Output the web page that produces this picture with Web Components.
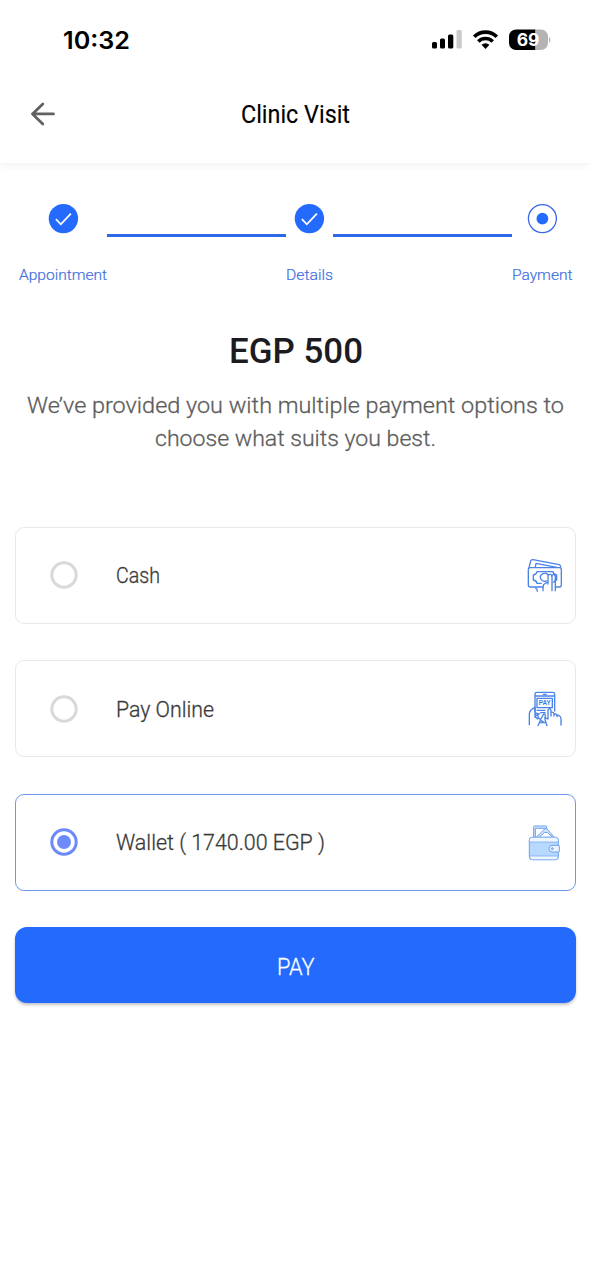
<!DOCTYPE html>
<html lang="en">
<head>
<meta charset="utf-8">
<title>Clinic Visit</title>
<style>
html, body { margin: 0; background: #fff; }
body { font-family: Roboto, "Noto Sans", sans-serif; color: #3c3c3c; }
</style>
</head>
<body>
<clinic-payment></clinic-payment>
<script>
function define(name, html, setup) {
  const tpl = document.createElement('template');
  tpl.innerHTML = html;
  customElements.define(name, class extends HTMLElement {
    connectedCallback() {
      if (this.shadowRoot) return;
      this.attachShadow({ mode: 'open' }).append(tpl.content.cloneNode(true));
      if (setup) setup(this, this.shadowRoot);
    }
  });
}

/* One line of text condensed or widened to a given width. */
define('fit-text', `<style>
:host { display: block; white-space: nowrap; }
span { display: inline-block; transform-origin: 0 50%; }
</style><span><slot></slot></span>`, (host, root) => {
  const w = +host.getAttribute('w');
  host.style.width = w + 'px';
  const span = root.querySelector('span');
  const fit = () => {
    span.style.transform = 'none';
    const real = span.getBoundingClientRect().width;
    if (real) span.style.transform = 'scaleX(' + w / real + ')';
  };
  requestAnimationFrame(fit);
  fit();
});

define('status-bar', `<style>
:host { display: flex; height: 79px; align-items: center; padding: 0 40px 0 63px; box-sizing: border-box; justify-content: space-between; color: #000; }
.time { font: 600 24px/30px Inter, sans-serif; padding-top: 2px; }
svg { display: block; }
.n { font: 700 17.5px Inter, sans-serif; }
</style>
<fit-text class="time" w="67">10:32</fit-text>
<svg width="120" height="24" viewBox="431 28 120 24">
<rect x="432" y="42" width="5" height="6.5" rx="1.5"/><rect x="440" y="38.5" width="5" height="10" rx="1.5"/><rect x="448" y="34.5" width="5.3" height="14" rx="1.5"/><rect x="456.5" y="30" width="5.3" height="18.500" rx="1.5" fill="#cacaca"/>
<g fill="none" stroke="#000" stroke-width="3.6"><path d="M474.200 36.800a16 16 0 0 1 22.600 0"/><path d="M478.300 41.500a10.300 10.300 0 0 1 14.400 0"/></g>
<path d="M485.500 49l-4-4.200q4-3.200 8 0z"/>
<path d="M516 29.500h19.500v20.500H516a7 7 0 0 1-7-7v-6.500a7 7 0 0 1 7-7z"/><path fill="#b4b4b4" d="M535.500 29.500h5.500a7 7 0 0 1 7 7v6.500a7 7 0 0 1-7 7h-5.500z"/><path fill="#b4b4b4" d="M549 37q3 3 0 6z"/>
<text class="n" x="528" y="46" fill="#fff" text-anchor="middle">69</text>
</svg>`);

define('app-header', `<style>
:host { display: grid; grid-template-columns: 100px 1fr 100px; height: 84px; align-items: center; box-shadow: 0 2px 8px rgba(0,0,0,.06); clip-path: inset(0 0 -12px 0); color: #000; font-size: 26.500px; line-height: 36px; }
svg { display: block; margin: -14px 0 0 28px; }
fit-text { justify-self: center; margin-top: -14px; -webkit-text-stroke: .15px; }
</style>
<svg width="30" height="30" viewBox="28 99 30 30" fill="none" stroke="#616161" stroke-width="2.800" stroke-linecap="round" stroke-linejoin="round"><path d="M53.500 113.900H32.500M42.800 104L32.500 113.900 42.800 124"/></svg>
<fit-text w="109"><slot></slot></fit-text>`);

define('step-item', `<style>
:host { display: flex; flex-direction: column; align-items: center; color: #3f6fdf; font-size: 15px; line-height: 20px; font-weight: 300; -webkit-text-stroke: .2px; }
svg { display: block; margin-bottom: 31px; }
:host([state="done"]) .now, :host([state="now"]) .done { display: none; }
</style>
<svg width="30" height="30" viewBox="-.4 .4 30 30" overflow="visible"><g class="done"><circle cx="15" cy="15" r="14.700" fill="#246bfd"/><path d="M7.500 15.600l4.900 5.100L22.500 10" fill="none" stroke="#fff" stroke-width="1.800"/></g><g class="now"><circle cx="15" cy="15" r="14" fill="none" stroke="#3a65e8" stroke-width="1.300"/><circle cx="15" cy="15" r="5.900" fill="#246bfd"/></g></svg>
<slot></slot>`);

define('progress-steps', `<style>
:host { display: flex; padding: 40.600px 18.600px 0 18.600px; }
i { flex: 1; height: 3px; background: #2c69e8; margin-top: 30px; }
</style>
<step-item state="done"><fit-text w="88">Appointment</fit-text></step-item><i></i>
<step-item state="done"><fit-text w="47">Details</fit-text></step-item><i></i>
<step-item state="now"><fit-text w="60.500">Payment</fit-text></step-item>`);

define('price-summary', `<style>
:host { display: flex; flex-direction: column; align-items: center; padding-top: 41.400px; }
.price { font-size: 35.500px; line-height: 50px; font-weight: 500; color: #1c1b1f; margin-bottom: 13px; }
.text { font-size: 22.700px; line-height: 33.400px; font-weight: 300; color: #5c5c5c; -webkit-text-stroke: .3px; }
</style>
<fit-text class="price" w="134">EGP 500</fit-text>
<fit-text class="text" w="537">We’ve provided you with multiple payment options to</fit-text>
<fit-text class="text" w="281">choose what suits you best.</fit-text>`);

define('pay-option', `<style>
:host { display: flex; align-items: center; height: 97px; box-sizing: border-box; border: 1px solid #e9e9ec; border-radius: 9px; padding-left: 34.400px; font-size: 21.700px; line-height: 30px; color: #3a3a3a; font-weight: 300; -webkit-text-stroke: .3px; }
:host([selected]) { border-color: #6f9ae8; }
.radio { width: 28px; height: 28px; margin-right: 38px; flex: none; }
.radio circle { fill: none; stroke: #d9d9d9; stroke-width: 3; }
.radio .dot { display: none; }
:host([selected]) .radio circle { stroke: #6c8afa; }
:host([selected]) .radio .dot { display: block; fill: #6c8afa; stroke: none; }
.label { display: block; padding-top: 2px; }
.icon { display: block; margin-left: auto; width: 60px; height: 60px; }
</style>
<svg class="radio" viewBox="0 0 28 28"><circle cx="14" cy="14" r="12.200"/><circle class="dot" cx="14" cy="14" r="7"/></svg>
<slot class="label"></slot><slot class="icon" name="icon"></slot>`);

const art = {
  cash: `<g fill="none" stroke="#4b83e6" stroke-width="4" stroke-linejoin="round" stroke-linecap="round">
<path d="M84 126H46q-6 0-6-6V74q0-6 6-6h87q6 0 6 6v46q0 6-6 6h-10"/><path d="M42 68l5-20q2-5 7-4l78 15q5 1 5 8"/><path d="M61 66l2-11 63 12"/>
<path d="M79 115H66q-1-8-11-10V90q10-2 11-10h48q1 8 11 10v15q-7 1-9 7"/><path d="M94 108a13 12 0 1 1 6-18"/>
<path d="M84 137V125q0-7 7-10l8-4V94q0-6 6-6 5 0 5 6M99 111v6M111 137V94q0-6 5-5 5 0 5 7v41M62 129q5 3 5 10"/></g>`,
  online: `<g transform="translate(0 3)"><g fill="none" stroke="#4b83e6" stroke-width="4" stroke-linejoin="round" stroke-linecap="round">
<path d="M60 96V43q0-6 6-6h47q6 0 6 6v50M60 48h59M85 43h9"/><rect x="66" y="55" width="46" height="28"/>
<path d="M66 91h24M77 98h13M65 106l8-5"/><path d="M43 134v-32q1-13 17-20v27l8 8M60 112q1-15 7-12l3 13 7 6-8 18M76 120l10-18q5-2 5 5l-1 12 6 18M77 121l10 6M74 128h15"/>
<path d="M99 117V91q1-6 6-5 3 1 3 7v15M108 105V98q1-3 6-1 3 1 3 7v4M117 105q1-4 5-3 4 1 4 8M126 107q3-3 8 1 4 3 4 10v17M90 113q4 2 9 4"/></g>
<text x="89.500" y="76" text-anchor="middle" font-family="Liberation Sans, sans-serif" font-weight="700" font-size="20" fill="#3f77df" stroke="none" textLength="36" lengthAdjust="spacingAndGlyphs">PAY</text></g>`,
  wallet: `<g stroke="#6ca1ec" stroke-width="3" stroke-linejoin="round" transform="translate(-1 -1)">
<path fill="#d4e6ff" d="M57 78V46q0-3 3-3h33q3 0 3 3v32z"/><path fill="#fff" d="M62 77V50h28v27z"/>
<path fill="#d4e6ff" d="M64 78l27-27q3-2 6 1l23 26z"/><path fill="#fff" d="M75 77q1-7 8-8l6-7q5 1 9 0l8 8q6 1 7 7z"/>
<rect x="44" y="77" width="87" height="67" rx="8" fill="#b8d9ff"/><path fill="#eef6ff" d="M44 91v-6q0-8 8-8h71q8 0 8 8v6zM44 133q1 11 9 11h69q8 0 9-11z" stroke-width="2"/>
<path fill="#eaf4ff" d="M134 102v18q0 1-3 1h-19q-9 0-9-10t9-10h19q3 0 3 1z"/><circle cx="113" cy="111" r="3" fill="#9cc7ff"/></g>`
};
define('pay-icon', `<style>:host { display: block; width: 60px; height: 60px; } svg { display: block; }</style><svg width="60" height="60" viewBox="0 0 180 180"></svg>`,
  (host, root) => { root.querySelector('svg').innerHTML = art[host.getAttribute('kind')]; });

define('pay-button', `<style>
:host { display: block; }
button { width: 100%; height: 76px; border: 0; border-radius: 12px; background: #246bfd; color: #fff; font: 300 23.500px/32px Roboto, sans-serif; display: flex; align-items: center; justify-content: center; padding: 3px 0 0; box-shadow: 0 2px 3px rgba(0,0,0,.24); -webkit-text-stroke: .3px; }
</style><button><fit-text w="37.500"><slot></slot></fit-text></button>`);

define('clinic-payment', `<style>
:host { display: block; height: 1280px; overflow: hidden; background: #fff; }
main { display: flex; flex-direction: column; gap: 36.500px; padding: 70.800px 15px 0; }
</style>
<status-bar></status-bar>
<app-header>Clinic Visit</app-header>
<progress-steps></progress-steps>
<price-summary></price-summary>
<main>
<pay-option><fit-text w="44">Cash</fit-text><pay-icon slot="icon" kind="cash"></pay-icon></pay-option>
<pay-option><fit-text w="98">Pay Online</fit-text><pay-icon slot="icon" kind="online"></pay-icon></pay-option>
<pay-option selected><fit-text w="209">Wallet ( 1740.00 EGP )</fit-text><pay-icon slot="icon" kind="wallet"></pay-icon></pay-option>
<pay-button>PAY</pay-button>
</main>`);
</script>
</body>
</html>
